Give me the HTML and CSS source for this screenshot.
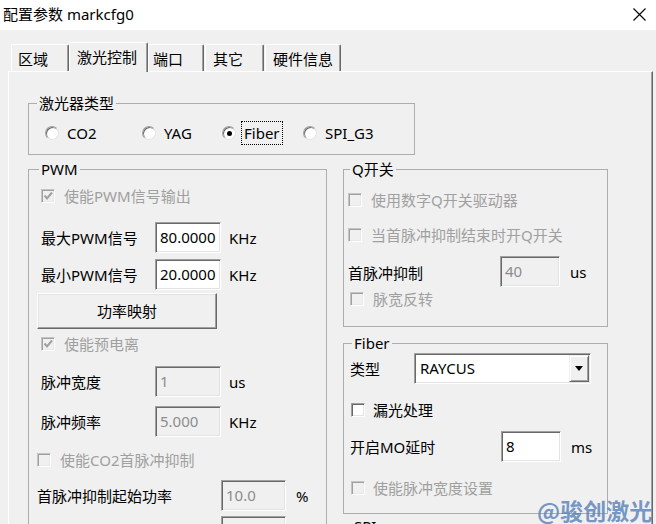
FILE: index.html
```html
<!DOCTYPE html>
<html>
<head>
<meta charset="utf-8">
<title>配置参数 markcfg0</title>
<link rel="stylesheet" href="styles.css">
</head>
<body>
<div class="titlebar">
  <span class="title">配置参数 markcfg0</span>
  <svg class="close" width="13" height="13" viewBox="0 0 13 13"><path d="M0.5 0.5L12.5 12.5M12.5 0.5L0.5 12.5" stroke="#000" stroke-width="1.1" fill="none"/></svg>
</div>
<div class="client">
  <div class="tabs">
    <div class="tab tab-area">区域</div>
    <div class="tab tab-laser active">激光控制</div>
    <div class="tab tab-port">端口</div>
    <div class="tab tab-other">其它</div>
    <div class="tab tab-hw">硬件信息</div>
  </div>
  <div class="panel">
    <div class="group laser">
      <span class="legend lg-laser">激光器类型</span>
      <div class="radios">
        <div class="radio-item ri-co2"><span class="radio"></span><span class="rtext">CO2</span></div>
        <div class="radio-item ri-yag"><span class="radio"></span><span class="rtext">YAG</span></div>
        <div class="radio-item ri-fiber"><span class="radio on"></span><span class="rtext focus">Fiber</span></div>
        <div class="radio-item"><span class="radio"></span><span class="rtext">SPI_G3</span></div>
      </div>
    </div>
    <div class="cols">
      <div class="group pwm">
        <span class="legend lg-pwm">PWM</span>
        <div class="pwm-body">
          <div class="chk-row dis pw-r1"><span class="cb dis-cb"><svg width="12" height="12" viewBox="0 0 12 12"><path d="M2.5 5.5L5 8.5L10 2.5" stroke="#a0a0a0" stroke-width="2" fill="none"/></svg></span>使能PWM信号输出</div>
          <div class="field-row pw-r2"><span class="lab lab-pwm">最大PWM信号</span><span class="edit e66">80.0000</span><span class="unit u8">KHz</span></div>
          <div class="field-row pw-r3"><span class="lab lab-pwm">最小PWM信号</span><span class="edit e66">20.0000</span><span class="unit u8">KHz</span></div>
          <div class="btn map-btn">功率映射</div>
          <div class="chk-row dis pw-r5"><span class="cb dis-cb"><svg width="12" height="12" viewBox="0 0 12 12"><path d="M2.5 5.5L5 8.5L10 2.5" stroke="#a0a0a0" stroke-width="2" fill="none"/></svg></span>使能预电离</div>
          <div class="field-row pw-r6"><span class="lab lab-pwm">脉冲宽度</span><span class="edit e66 ro">1</span><span class="unit u8">us</span></div>
          <div class="field-row pw-r7"><span class="lab lab-pwm">脉冲频率</span><span class="edit e66 ro">5.000</span><span class="unit u8">KHz</span></div>
          <div class="chk-row dis pw-r8"><span class="cb dis-cb"></span>使能CO2首脉冲抑制</div>
          <div class="field-row pw-r9"><span class="lab lab-long">首脉冲抑制起始功率</span><span class="edit e65 ro">10.0</span><span class="unit u10">%</span></div>
          <div class="field-row pw-r10"><span class="lab lab-long">首脉冲抑制功率增量</span><span class="edit e65 ro">10.0</span><span class="unit u10">%</span></div>
        </div>
      </div>
      <div class="rightcol">
        <div class="group qsw">
          <span class="legend lg-q">Q开关</span>
          <div class="q-body">
            <div class="chk-row dis q-r1"><span class="cb dis-cb"></span>使用数字Q开关驱动器</div>
            <div class="chk-row dis q-r2"><span class="cb dis-cb"></span>当首脉冲抑制结束时开Q开关</div>
            <div class="field-row q-r3"><span class="lab lab-q">首脉冲抑制</span><span class="edit e60 ro">40</span><span class="unit u10">us</span></div>
            <div class="chk-row dis q-r4"><span class="cb dis-cb"></span>脉宽反转</div>
          </div>
        </div>
        <div class="group fiber">
          <span class="legend lg-fiber">Fiber</span>
          <div class="f-body">
            <div class="field-row f-r1"><span class="lab lab-type">类型</span>
              <span class="combo"><span class="combo-text">RAYCUS</span><span class="drop"><svg width="8" height="5" viewBox="0 0 8 5"><path d="M0 0H8L4 5Z" fill="#000"/></svg></span></span>
            </div>
            <div class="chk-row f-r2"><span class="cb"></span>漏光处理</div>
            <div class="field-row f-r3"><span class="lab lab-mo">开启MO延时</span><span class="edit e60">8</span><span class="unit u10">ms</span></div>
            <div class="chk-row dis f-r4"><span class="cb dis-cb"></span>使能脉冲宽度设置</div>
          </div>
        </div>
        <div class="group spi">
          <span class="legend lg-fiber">SPI</span>
        </div>
      </div>
    </div>
  </div>
</div>
<div class="watermark">@骏创激光</div>
</body>
</html>
```

FILE: styles.css
```css
* { box-sizing: border-box; }
html, body { margin: 0; padding: 0; }
body {
  width: 656px;
  height: 524px;
  overflow: hidden;
  position: relative;
  background: #f0f0f0;
  font-family: "Noto Sans", "Noto Sans CJK SC", sans-serif;
  font-size: 15px;
  line-height: 20px;
  color: #000;
}

/* title bar */
.titlebar {
  height: 30px;
  background: #fff;
  display: flex;
  align-items: center;
  justify-content: space-between;
  padding: 0 10px 0 3px;
}
.title { font-size: 15px; line-height: 20px; margin-top: -2px; }
.close { display: block; margin-top: -2px; }

/* client area */
.client { padding: 12px 0 0 8px; }

.tabs {
  display: flex;
  align-items: flex-end;
  height: 29px;
  margin-left: 3px;
  position: relative;
  z-index: 1;
}
.tab {
  height: 27px;
  background: #f0f0f0;
  border-top: 1px solid #fff;
  border-left: 1px solid #fff;
  border-right: 1px solid #696969;
  box-shadow: inset -1px 0 0 #a0a0a0;
  border-radius: 2px 2px 0 0;
  padding-top: 4px;
  line-height: 20px;
  white-space: nowrap;
}
.tab-area { width: 58px; padding-left: 6px; }
.tab-laser { width: 79px; padding-left: 7px; }
.tab-port { width: 56px; padding-left: 4px; }
.tab-other { width: 59px; padding-left: 7px; margin-left: 1px; }
.tab-hw { width: 76px; padding-left: 7px; margin-left: 1px; }
.tab.active {
  height: 30px;
  margin-bottom: -1px;
  padding-top: 4px;
}

.panel {
  width: 645px;
  height: 470px;
  border-top: 1px solid #fff;
  border-left: 1px solid #fff;
  border-right: 1px solid #696969;
  box-shadow: inset -1px 0 0 #a0a0a0;
  padding: 31px 0 0 19px;
}

/* group boxes: the div's top edge is the group line */
.group {
  position: relative;
  border: 1px solid #adadad;
  flex: none;
}
.legend {
  position: absolute;
  top: -10px;
  padding: 0 2px;
  line-height: 18px;
  height: 18px;
  background: #f0f0f0;
  white-space: nowrap;
}
.lg-laser { left: 8px; }
.lg-pwm { left: 10px; }
.lg-q { left: 6px; }
.lg-fiber { left: 8px; }

.laser { width: 387px; height: 52px; padding: 19px 0 0 16px; }
.radios {
  display: flex;
  align-items: center;
  height: 20px;
}
.radio-item { display: flex; align-items: center; }
.ri-co2 { width: 97px; }
.ri-yag { width: 80px; }
.ri-fiber { width: 81px; }
.radio {
  width: 14px;
  height: 14px;
  border-radius: 50%;
  background: #fff;
  border: 1px solid;
  border-color: #a0a0a0 #e3e3e3 #e3e3e3 #a0a0a0;
  box-shadow: inset 1px 1px 0 #696969;
  margin-right: 8px;
  display: flex;
  align-items: center;
  justify-content: center;
  flex: none;
}
.radio.on::after {
  content: "";
  width: 5px;
  height: 5px;
  border-radius: 50%;
  background: #000;
}
.rtext { line-height: 20px; }
.rtext.focus {
  border: 1px dotted #000;
  padding: 1px 2px;
  margin-left: -3px;
  line-height: 20px;
}

.cols {
  display: flex;
  align-items: flex-start;
  gap: 16px;
  margin-top: 14px;
}
.pwm { width: 299px; height: 420px; }
.rightcol { width: 265px; display: flex; flex-direction: column; }

/* rows */
.chk-row {
  display: flex;
  align-items: center;
  height: 20px;
  white-space: nowrap;
}
.chk-row.dis { color: #a0a0a0; }
.cb {
  width: 14px;
  height: 14px;
  flex: none;
  background: #fff;
  border: 1px solid;
  border-color: #a0a0a0 #fff #fff #a0a0a0;
  box-shadow: inset 1px 1px 0 #696969, inset -1px -1px 0 #e3e3e3;
  margin-right: 9px;
  display: flex;
  align-items: center;
  justify-content: center;
}
.cb.dis-cb {
  background: #f0f0f0;
  border-color: #c4c4c4 #fff #fff #c4c4c4;
  box-shadow: inset 1px 1px 0 #a0a0a0, inset -1px -1px 0 #e8e8e8;
}
.cb svg { display: block; }

.field-row {
  display: flex;
  align-items: center;
  white-space: nowrap;
}
.lab { flex: none; }
.edit {
  height: 31px;
  flex: none;
  background: #fff;
  border: 1px solid;
  border-color: #a0a0a0 #fff #fff #a0a0a0;
  box-shadow: inset 1px 1px 0 #696969, inset -1px -1px 0 #e3e3e3;
  padding-left: 4px;
  line-height: 29px;
  overflow: hidden;
}
.edit.ro { background: #f0f0f0; color: #8d8d8d; }
.e66 { width: 66px; }
.e65 { width: 65px; }
.e60 { width: 60px; }
.unit { flex: none; }
.u8 { margin-left: 8px; }
.u10 { margin-left: 10px; }

.btn {
  background: #f0f0f0;
  border: 1px solid;
  border-color: #fff #696969 #696969 #fff;
  box-shadow: inset -1px -1px 0 #a0a0a0, inset 1px 1px 0 #e3e3e3;
  text-align: center;
}

/* PWM group */
.pwm-body { padding-left: 12px; }
.lab-pwm { width: 114px; }
.lab-long { width: 184px; }
.pw-r1 { margin-top: 16px; }
.pw-r2 { margin-top: 16px; }
.pw-r3 { margin-top: 6px; }
.map-btn {
  width: 180px;
  height: 36px;
  line-height: 34px;
  margin: 3px 0 0 -4px;
}
.pw-r5 { margin-top: 5px; }
.pw-r6 { margin-top: 12px; }
.pw-r7 { margin-top: 9px; }
.pw-r8 { margin-top: 13px; margin-left: -4px; }
.pw-r9 { margin-top: 10px; margin-left: -4px; }
.pw-r10 { margin-top: 5px; margin-left: -4px; }

/* Q switch group */
.qsw { height: 158px; }
.q-body { padding: 0 0 0 4px; }
.q-r1 { margin-top: 20px; }
.q-r2 { margin-top: 15px; }
.q-r3 { margin-top: 11px; }
.q-r3 .lab { padding-top: 3px; }
.q-r4 { margin-top: 2px; margin-left: 2px; }
.lab-q { width: 152px; }

/* Fiber group */
.fiber { margin-top: 16px; height: 171px; }
.f-body { padding: 0 0 0 6px; }
.f-r1 { margin-top: 9px; }
.lab-type { width: 64px; }
.combo {
  width: 177px;
  height: 31px;
  flex: none;
  display: flex;
  background: #fff;
  border: 1px solid;
  border-color: #a0a0a0 #fff #fff #a0a0a0;
  box-shadow: inset 1px 1px 0 #696969, inset -1px -1px 0 #e3e3e3;
  padding: 1px;
}
.combo-text { flex: 1; padding-left: 4px; line-height: 27px; }
.drop {
  width: 20px;
  height: 27px;
  background: #f0f0f0;
  border: 1px solid;
  border-color: #f0f0f0 #696969 #696969 #f0f0f0;
  box-shadow: inset 1px 1px 0 #fff, inset -1px -1px 0 #a0a0a0;
  display: flex;
  align-items: center;
  justify-content: center;
}
.drop svg { display: block; }
.f-r2 { margin-top: 16px; margin-left: 1px; }
.f-r2 .cb { margin-right: 8px; }
.f-r3 { margin-top: 11px; }
.lab-mo { width: 151px; }
.f-r4 { margin-top: 16px; margin-left: 1px; }
.f-r4 .cb { margin-right: 8px; }

.spi { margin-top: 12px; height: 60px; }

/* watermark overlay */
.watermark {
  position: absolute;
  left: 537px;
  top: 496px;
  font-family: "Noto Sans CJK SC", sans-serif;
  font-weight: bold;
  font-size: 23px;
  line-height: 28px;
  color: rgba(90, 130, 185, 0.82);
  white-space: nowrap;
}
```
